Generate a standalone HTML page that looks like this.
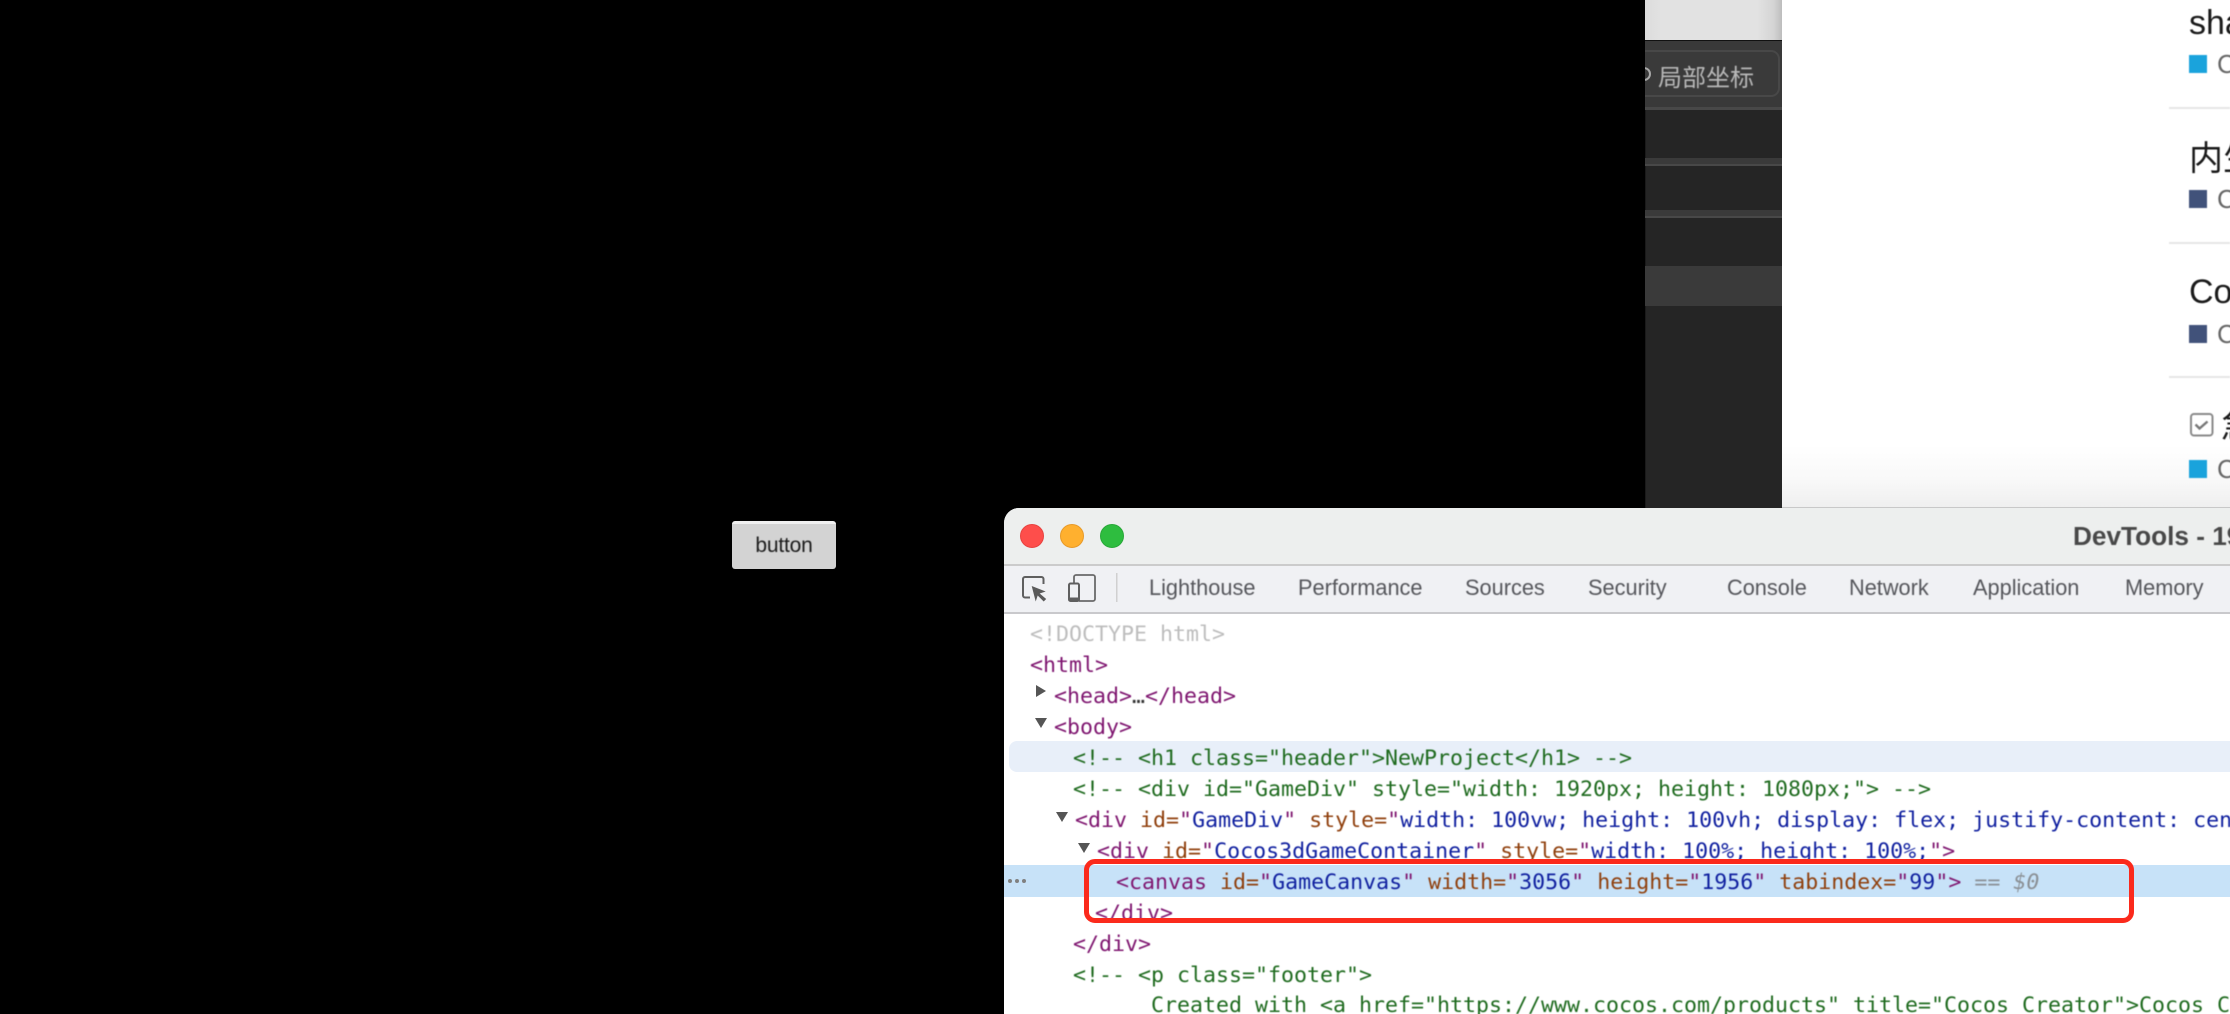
<!DOCTYPE html>
<html lang="zh">
<head>
<meta charset="utf-8">
<title>DevTools</title>
<style>
html,body{margin:0;padding:0;background:#000;width:2230px;height:1014px;overflow:hidden}
#root{position:relative;width:2230px;height:1014px;overflow:hidden;background:#000;font-family:"Liberation Sans","Noto Sans CJK SC",sans-serif}
.a{position:absolute;white-space:pre}
.soft{filter:blur(.4px)}
.tab{position:absolute;top:575px;line-height:26px;font-size:21.75px;color:#55565b;white-space:pre}
.l{position:absolute;white-space:pre;font-family:"DejaVu Sans Mono","Liberation Mono",monospace;font-size:21.6px;line-height:31px;height:31px;color:#881280}
.g{color:#1f6b1f}.p{color:#7f1670}.n{color:#8f3f0c}.v{color:#0f1f9f}.d{color:#bdbdbd}.m{color:#8a8f94}
.t{position:absolute;left:2189px;font-size:34px;line-height:40px;color:#1a1a1a;white-space:pre}
.c{position:absolute;left:2217px;font-size:26px;line-height:30px;color:#666;white-space:pre}
.sq{position:absolute;left:2189px;width:18px;height:18px}
.hr{position:absolute;left:2169px;width:61px;height:2px;background:#e6e6e6}
.tri{position:absolute;width:0;height:0}
.dot{position:absolute;top:879px;width:4px;height:4px;border-radius:50%;background:#808080}
</style>
</head>
<body>
<div id="root">

<!-- in-game button -->
<div class="a" style="left:732px;top:521px;width:104px;height:48px;background:#d3d3d3;border-top:3px solid #f0f0f0;box-sizing:border-box;border-radius:3px"></div>
<div class="a soft" style="left:732px;top:530px;width:104px;line-height:32px;text-align:center;font-size:21px;letter-spacing:-.2px;color:#1c1c1c">button</div>

<!-- dark editor panel -->
<div class="a" style="left:1645px;top:0;width:137px;height:508px;background:#252525;overflow:hidden">
  <div class="a" style="left:0;top:0;width:1px;height:508px;background:#1a1a1a"></div>
  <div class="a" style="left:0;top:0;width:137px;height:40px;background:linear-gradient(to right,#dcdcdc 0,#e2e2e2 12%,#e2e2e2 82%,#d4d4d4 94%,#bdbdbd 100%)"></div>
  <div class="a" style="left:0;top:40px;width:137px;height:1px;background:#111"></div>
  <div class="a" style="left:0;top:41px;width:137px;height:69px;background:#393939"></div>
  <div class="a" style="left:0;top:107px;width:137px;height:3px;background:#484848"></div>
  <div class="a" style="left:-30px;top:50px;width:165px;height:47px;box-sizing:border-box;border:2px solid #484848;border-radius:9px;background:#3a3a3a"></div>
  <div class="a" style="left:-8px;top:67px;width:14px;height:14px;box-sizing:border-box;border:2.5px solid #a8a8a8;border-radius:50%"></div>
  <div class="a soft" style="left:13px;top:62px;font-size:24px;line-height:34px;color:#b8b8b8;font-family:'Liberation Sans','Noto Sans CJK SC',sans-serif">局部坐标</div>
  <div class="a" style="left:0;top:158px;width:137px;height:8px;background:#3a3a3a"></div>
  <div class="a" style="left:0;top:164px;width:137px;height:2px;background:#484848"></div>
  <div class="a" style="left:0;top:210px;width:137px;height:8px;background:#3a3a3a"></div>
  <div class="a" style="left:0;top:216px;width:137px;height:2px;background:#484848"></div>
  <div class="a" style="left:0;top:266px;width:137px;height:40px;background:#3a3a3a"></div>
</div>

<!-- white page -->
<div class="a" style="left:1782px;top:0;width:448px;height:508px;background:#fff;overflow:hidden">
  <div class="a" style="left:0;top:445px;width:448px;height:62px;background:linear-gradient(to bottom,#fff 0,#f9f9f9 55%,#efefef 100%)"></div>
  <div class="a" style="left:0;top:507px;width:448px;height:1px;background:#c8c8c8"></div>
</div>

<div class="soft">
<div class="t" style="top:3px">sha</div>
<div class="sq" style="top:55px;background:#1aa3dc"></div>
<div class="c" style="top:49px">C</div>
<div class="hr" style="top:107px"></div>

<div class="t" style="top:139px">内生</div>
<div class="sq" style="top:190px;background:#41527a"></div>
<div class="c" style="top:184px">C</div>
<div class="hr" style="top:242px"></div>

<div class="t" style="top:272px">Co</div>
<div class="sq" style="top:325px;background:#41527a"></div>
<div class="c" style="top:319px">C</div>
<div class="hr" style="top:376px"></div>

<svg class="a" style="left:2190px;top:413px" width="24" height="24" viewBox="0 0 24 24"><rect x="1" y="1" width="21.5" height="21.5" rx="3" fill="none" stroke="#8a8a8a" stroke-width="2"/><path d="M5.5 11.500l4 4 8-7" fill="none" stroke="#777" stroke-width="2.400"/></svg>
<div class="t" style="top:407px;left:2221px">急</div>
<div class="sq" style="top:460px;background:#1aa3dc"></div>
<div class="c" style="top:454px">C</div>
</div>

<!-- devtools window -->
<div class="a" style="left:1004px;top:508px;width:1240px;height:520px;background:#fff;border-radius:15px 0 0 0;overflow:hidden">
  <div class="a" style="left:0;top:0;width:1240px;height:56px;background:#edefee"></div>
  <div class="a" style="left:0;top:56px;width:1240px;height:2px;background:#cbcbcb"></div>
  <div class="a" style="left:0;top:58px;width:1240px;height:46px;background:#f0f1f4"></div>
  <div class="a" style="left:0;top:104px;width:1240px;height:1.5px;background:#c9c9cc"></div>
  <div class="a" style="left:5px;top:233px;width:1240px;height:31px;background:#e8eff9;border-radius:8px 0 0 8px"></div>
  <div class="a" style="left:0;top:357px;width:1240px;height:32px;background:#c7e2f8"></div>
</div>

<!-- traffic lights -->
<div class="a" style="left:1020px;top:524px;width:24px;height:24px;box-sizing:border-box;border-radius:50%;background:#fe4e4b;border:1px solid #e8423f"></div>
<div class="a" style="left:1060px;top:524px;width:24px;height:24px;box-sizing:border-box;border-radius:50%;background:#ffb02f;border:1px solid #e89a28"></div>
<div class="a" style="left:1100px;top:524px;width:24px;height:24px;box-sizing:border-box;border-radius:50%;background:#2ebd3f;border:1px solid #28a838"></div>

<div class="a soft" style="left:2073px;top:520px;font-size:26.2px;line-height:32px;font-weight:bold;color:#484848">DevTools - 19</div>

<!-- toolbar icons -->
<svg class="a" style="left:1018px;top:570px" width="100" height="36" viewBox="0 0 100 36">
  <path d="M12 27.500H7a2 2 0 0 1-2-2V9a2 2 0 0 1 2-2h16.500a2 2 0 0 1 2 2v5" fill="none" stroke="#5f5f5f" stroke-width="2"/>
  <path d="M13.700 16l14 5.500-6 2 6.500 5.500-2.500 2.500-6-6-2 6z" fill="#5a5a5a"/>
  <path d="M56 13V7a2 2 0 0 1 2-2h17a2 2 0 0 1 2 2v22a2 2 0 0 1-2 2H61" fill="none" stroke="#6a6a6a" stroke-width="1.800"/>
  <rect x="51" y="13.500" width="10" height="17.500" rx="1.500" fill="#f0f1f4" stroke="#5f5f5f" stroke-width="2"/>
  <rect x="51" y="27.500" width="10" height="4" fill="#5f5f5f"/>
  <rect x="98" y="3" width="1.500" height="29" fill="#d0d0d0"/>
</svg>

<!-- tabs -->
<div class="soft">
<div class="tab" style="left:1149px">Lighthouse</div>
<div class="tab" style="left:1298px">Performance</div>
<div class="tab" style="left:1465px">Sources</div>
<div class="tab" style="left:1588px">Security</div>
<div class="tab" style="left:1727px">Console</div>
<div class="tab" style="left:1849px">Network</div>
<div class="tab" style="left:1973px">Application</div>
<div class="tab" style="left:2125px">Memory</div>
</div>

<!-- elements tree -->
<div class="soft">
<div class="l d" style="left:1030px;top:618.500px">&lt;!DOCTYPE html&gt;</div>
<div class="l p" style="left:1030px;top:649.500px">&lt;html&gt;</div>
<div class="l p" style="left:1054px;top:680.500px">&lt;head&gt;<span style="color:#333">…</span>&lt;/head&gt;</div>
<div class="l p" style="left:1054px;top:711.500px">&lt;body&gt;</div>
<div class="l g" style="left:1073px;top:742.500px">&lt;!-- &lt;h1 class="header"&gt;NewProject&lt;/h1&gt; --&gt;</div>
<div class="l g" style="left:1073px;top:773.500px">&lt;!-- &lt;div id="GameDiv" style="width: 1920px; height: 1080px;"&gt; --&gt;</div>
<div class="l" style="left:1075px;top:804.500px"><span class="p">&lt;div</span> <span class="n">id=</span><span class="p">"</span><span class="v">GameDiv</span><span class="p">"</span> <span class="n">style=</span><span class="p">"</span><span class="v">width: 100vw; height: 100vh; display: flex; justify-content: center;</span></div>
<div class="l" style="left:1097px;top:835.500px"><span class="p">&lt;div</span> <span class="n">id=</span><span class="p">"</span><span class="v">Cocos3dGameContainer</span><span class="p">"</span> <span class="n">style=</span><span class="p">"</span><span class="v">width: 100%; height: 100%;</span><span class="p">"&gt;</span></div>
<div class="l" style="left:1116px;top:866.500px"><span class="p">&lt;canvas</span> <span class="n">id=</span><span class="p">"</span><span class="v">GameCanvas</span><span class="p">"</span> <span class="n">width=</span><span class="p">"</span><span class="v">3056</span><span class="p">"</span> <span class="n">height=</span><span class="p">"</span><span class="v">1956</span><span class="p">"</span> <span class="n">tabindex=</span><span class="p">"</span><span class="v">99</span><span class="p">"&gt;</span> <span class="m">==</span> <span class="m" style="font-style:italic">$0</span></div>
<div class="l p" style="left:1095px;top:897.500px">&lt;/div&gt;</div>
<div class="l p" style="left:1073px;top:928.500px">&lt;/div&gt;</div>
<div class="l g" style="left:1073px;top:959.500px">&lt;!-- &lt;p class="footer"&gt;</div>
<div class="l g" style="left:1151px;top:989.500px">Created with &lt;a href="https://www.cocos.com/products" title="Cocos Creator"&gt;Cocos C</div>
</div>

<!-- triangles -->
<div class="tri" style="left:1036px;top:685px;border-left:10px solid #555;border-top:6.500px solid transparent;border-bottom:6.500px solid transparent"></div>
<div class="tri" style="left:1035px;top:718px;border-top:10px solid #555;border-left:6px solid transparent;border-right:6px solid transparent"></div>
<div class="tri" style="left:1056px;top:812px;border-top:10px solid #555;border-left:6px solid transparent;border-right:6px solid transparent"></div>
<div class="tri" style="left:1078px;top:843px;border-top:10px solid #555;border-left:6px solid transparent;border-right:6px solid transparent"></div>
<div class="dot" style="left:1008px"></div>
<div class="dot" style="left:1015px"></div>
<div class="dot" style="left:1022px"></div>

<!-- red annotation -->
<div class="a" style="left:1080px;top:922px;width:70px;height:4px;background:#fff"></div>
<div class="a" style="left:1084px;top:859px;width:1050px;height:63.500px;box-sizing:border-box;border:5px solid #fb2a1c;border-radius:11px"></div>

</div>
</body>
</html>
